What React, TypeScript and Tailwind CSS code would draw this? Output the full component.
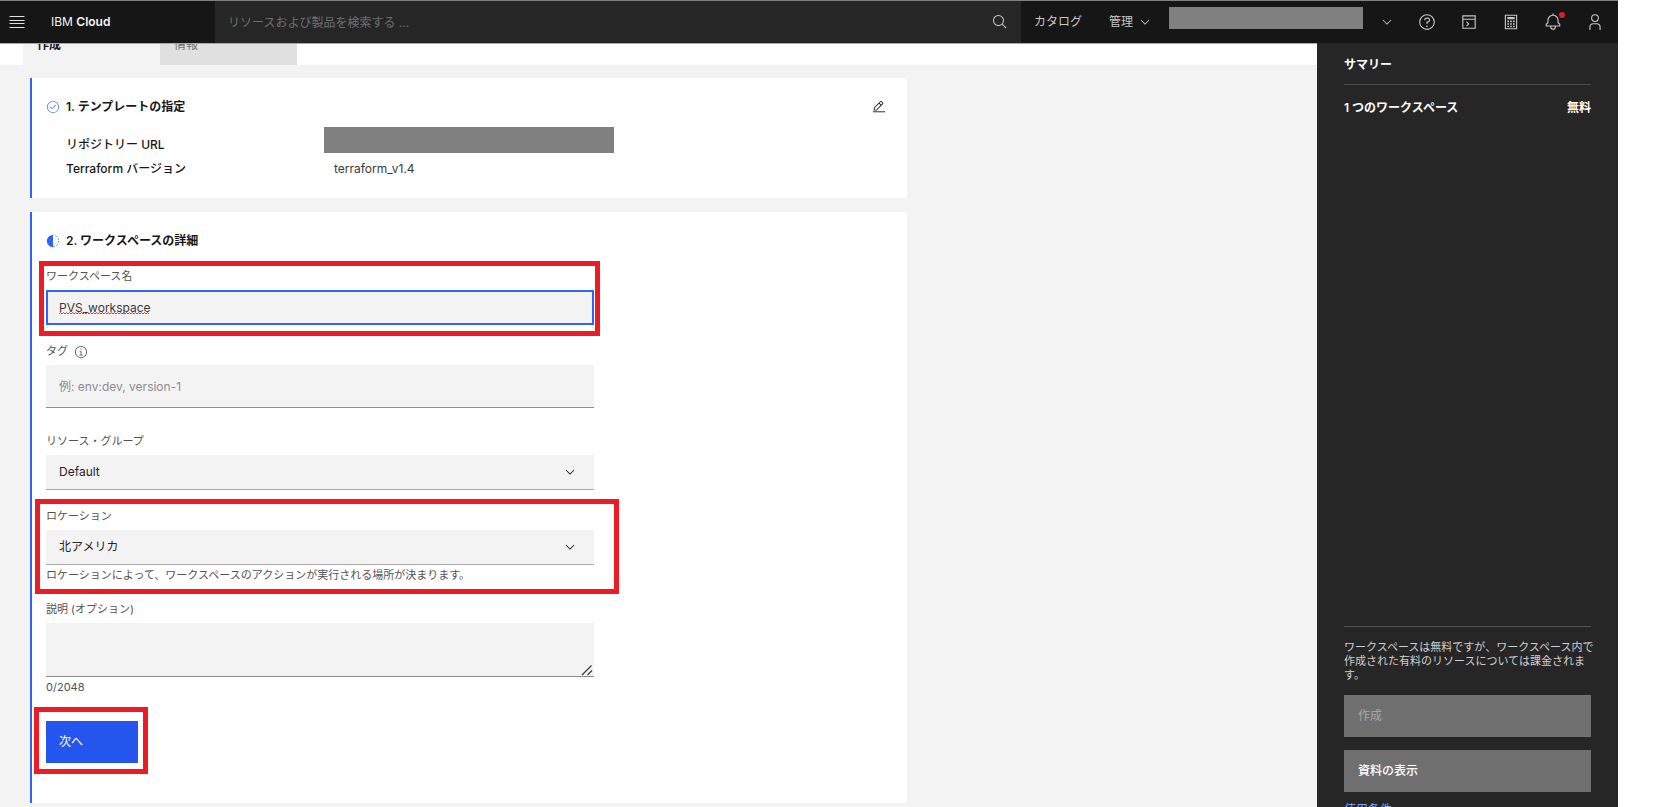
import { useState } from "react";
import type { ReactNode } from "react";

interface IconProps {
  className?: string;
  children: ReactNode;
}

const LOCATIONS = ["北アメリカ", "ヨーロッパ", "ロンドン"];
const RESOURCE_GROUPS = ["Default"];
const MAX_DESCRIPTION = 2048;

const RING =
  "M16,2A14,14,0,1,0,30,16,14,14,0,0,0,16,2Zm0,26A12,12,0,1,1,28,16,12,12,0,0,1,16,28Z";

function Icon({ className = "size-[18px]", children }: IconProps) {
  return (
    <svg
      viewBox="0 0 32 32"
      fill="currentColor"
      className={`shrink-0 ${className}`}
      aria-hidden="true"
    >
      {children}
    </svg>
  );
}

function ChevronDown({ className }: { className?: string }) {
  return (
    <Icon className={className}>
      <path d="M16 22L6 12 7.4 10.6 16 19.2 24.6 10.6 26 12z" />
    </Icon>
  );
}

function HeaderButton({ label, children }: { label: string; children: ReactNode }) {
  return (
    <button
      type="button"
      aria-label={label}
      className="flex h-full w-[42px] items-center justify-center"
    >
      {children}
    </button>
  );
}

function Header() {
  return (
    <header className="relative z-10 flex h-[43px] shrink-0 border-t border-[#808080] bg-[#161616] text-xs text-[#c6c6c6]">
      <div className="flex w-[215px] shrink-0 items-center">
        <button type="button" aria-label="メニュー" className="flex h-full items-center pr-[26px] pl-[9px]">
          <svg viewBox="0 0 16 12" className="h-3 w-4" stroke="#e0e0e0" aria-hidden="true">
            <path d="M0.5 0.5h15M0.5 4.5h15M0.5 7.5h15M0.5 11.5h15" />
          </svg>
        </button>
        <a href="#home" className="text-[#f4f4f4]">
          IBM <span className="font-semibold">Cloud</span>
        </a>
      </div>
      <div className="flex flex-1 items-center bg-[#262626] pr-[13px] pl-[13px]">
        <input
          type="text"
          aria-label="検索"
          placeholder="リソースおよび製品を検索する ..."
          className="h-full min-w-0 flex-1 bg-transparent outline-none placeholder:text-[#6f6f6f]"
        />
        <Icon className="size-4">
          <path d="M29,27.5859l-7.5521-7.5521a11.0177,11.0177,0,1,0-1.4141,1.4141L27.5859,29ZM4,13a9,9,0,1,1,9,9A9.01,9.01,0,0,1,4,13Z" />
        </Icon>
      </div>
      <nav className="flex shrink-0 items-center pr-[2px] pl-[13px]">
        <a href="#catalog">カタログ</a>
        <button type="button" className="ml-[27px] flex items-center gap-[5px]">
          管理
          <ChevronDown className="size-[14px]" />
        </button>
        <div className="mt-[-9px] ml-[17px] h-[22px] w-[194px] bg-[#808080]" />
        <button
          type="button"
          aria-label="アカウント"
          className="flex h-full w-[43px] items-center justify-center pl-[5px]"
        >
          <ChevronDown className="size-[14px]" />
        </button>
        <HeaderButton label="ヘルプ">
          <Icon>
            <path d={RING} />
            <circle cx="16" cy="23.5" r="1.5" />
            <path d="M17,8H15.5A4.49,4.49,0,0,0,11,12.5V13h2v-.5A2.5,2.5,0,0,1,15.5,10H17a2.5,2.5,0,0,1,0,5H15v4.5h2V17a4.5,4.5,0,0,0,0-9Z" />
          </Icon>
        </HeaderButton>
        <HeaderButton label="シェル">
          <Icon>
            <path d="M28 4H4v24h24zM26 6v4H6V6zM6 26V12h20v14z" />
            <path d="M10.8 16.2 12.2 14.8 16.8 19.4 12.2 24 10.8 22.6 14 19.4z" />
          </Icon>
        </HeaderButton>
        <HeaderButton label="コスト見積もり">
          <Icon>
            <path d="M27 3H5v26h22zM25 27H7V5h18z" />
            <path d="M9.5 7h13v4h-13zM9.5 13.5h3v3h-3zM14.5 13.5h3v3h-3zM19.5 13.5h3v3h-3zM9.5 18h3v3h-3zM14.5 18h3v3h-3zM19.5 18h3v3h-3zM9.5 22.5h3v3h-3zM14.5 22.5h3v3h-3zM19.5 22.5h3v3h-3z" />
          </Icon>
        </HeaderButton>
        <HeaderButton label="通知">
          <span className="relative">
            <Icon>
              <path d="M28.7071,19.293,26,16.5859V13a10.0136,10.0136,0,0,0-9-9.9492V1H15V3.0508A10.0136,10.0136,0,0,0,6,13v3.5859L3.2929,19.293A1,1,0,0,0,3,20v3a1,1,0,0,0,1,1h7v.7768a5.152,5.152,0,0,0,4.5,5.1987A5.0057,5.0057,0,0,0,21,25V24h7a1,1,0,0,0,1-1V20A1,1,0,0,0,28.7071,19.293ZM19,25a3,3,0,0,1-6,0V24h6Zm8-3H5V20.4141L7.707,17.707A1,1,0,0,0,8,17V13a8,8,0,0,1,16,0v4a1,1,0,0,0,.293.707L27,20.4141Z" />
            </Icon>
            <span className="absolute -top-[1px] -right-[3px] size-[6px] rounded-full bg-[#da1e28]" />
          </span>
        </HeaderButton>
        <HeaderButton label="プロファイル">
          <Icon>
            <path d="M16 4a5 5 0 1 1-5 5 5 5 0 0 1 5-5m0-2a7 7 0 1 0 7 7 7 7 0 0 0-7-7zM26 30H24V25a5 5 0 0 0-5-5H13a5 5 0 0 0-5 5v5H6V25a7 7 0 0 1 7-7h6a7 7 0 0 1 7 7z" />
          </Icon>
        </HeaderButton>
      </nav>
    </header>
  );
}

function Tabs() {
  return (
    <div role="tablist" className="-mt-[21px] flex bg-white pl-[23px] text-xs">
      <button
        type="button"
        role="tab"
        aria-selected="true"
        className="h-[42px] w-[137px] bg-[#f3f3f3] px-[14px] pt-[2px] text-left font-semibold text-[#161616]"
      >
        作成
      </button>
      <button
        type="button"
        role="tab"
        aria-selected="false"
        className="h-[42px] w-[137px] bg-[#e0e0e0] px-[14px] pt-[2px] text-left text-[#6f6f6f]"
      >
        情報
      </button>
    </div>
  );
}

function TemplateCard() {
  return (
    <section className="border-l-2 border-[#2f62ff] bg-white px-[14px] pt-5 pb-[17px]">
      <div className="flex h-[18px] items-center gap-[6px] pr-[7px]">
        <Icon className="size-[14px] text-[#5a87ff]">
          <path d={RING} />
          <path d="M14 21.414L9 16.413 10.413 15 14 18.586 21.585 11 23 12.415 14 21.414z" />
        </Icon>
        <h2 className="font-semibold">1. テンプレートの指定</h2>
        <button type="button" aria-label="編集" className="ml-auto">
          <Icon className="size-[14px]">
            <path d="M2 26H30V28H2z" />
            <path d="M25.4,9c.8-.8.8-2,0-2.8l-3.6-3.6c-.8-.8-2-.8-2.8,0L4,17.6V24h6.4L25.4,9z M20.4,4L24,7.6l-3,3L17.4,7L20.4,4z M6,22v-3.6L16,8.4l3.6,3.6L9.6,22H6z" />
          </Icon>
        </button>
      </div>
      <dl className="mt-[11px] grid grid-cols-[258px_1fr] pl-5 leading-6">
        <dt className="flex h-[30px] items-end font-medium">リポジトリー URL</dt>
        <dd className="h-[26px] w-[290px] bg-[#808080]" />
        <dt className="font-medium">Terraform バージョン</dt>
        <dd className="pl-[10px] text-[#393939]">terraform_v1.4</dd>
      </dl>
    </section>
  );
}

const labelClass = "mb-[5px] flex h-[17px] items-center text-[11px] text-[#525252]";
const helperClass = "mt-[2px] h-4 text-[11px] leading-4 whitespace-nowrap text-[#525252]";

function SelectField({ id, label, options }: { id: string; label: string; options: string[] }) {
  return (
    <>
      <label htmlFor={id} className={labelClass}>
        {label}
      </label>
      <div className="relative">
        <select
          id={id}
          className="block h-[35px] w-full appearance-none border-b border-[#a8a8a8] bg-[#f3f3f3] px-[13px] text-[#262626] outline-none"
        >
          {options.map((option) => (
            <option key={option}>{option}</option>
          ))}
        </select>
        <ChevronDown className="pointer-events-none absolute top-[10px] right-[17px] size-[14px]" />
      </div>
    </>
  );
}

function WorkspaceCard() {
  const [name, setName] = useState("PVS_workspace");
  const [description, setDescription] = useState("");

  return (
    <section className="border-l-2 border-[#2f62ff] bg-white px-[14px] pt-5 pb-10">
      <div className="flex h-[18px] items-center gap-[6px]">
        <Icon className="size-[14px] text-[#2f62ff]">
          <path d="M16 2a14 14 0 0 0 0 28z" />
          <circle
            cx="16"
            cy="16"
            r="13"
            fill="none"
            stroke="currentColor"
            strokeWidth="2"
            strokeDasharray="3.5 4.66"
          />
        </Icon>
        <h2 className="font-semibold">2. ワークスペースの詳細</h2>
      </div>

      <form
        className="mt-[18px] flex max-w-[548px] flex-col gap-[18px]"
        onSubmit={(event) => event.preventDefault()}
      >
        <div className="relative">
          <label htmlFor="workspace-name" className={labelClass}>
            ワークスペース名
          </label>
          <input
            id="workspace-name"
            type="text"
            value={name}
            spellCheck={false}
            onChange={(event) => setName(event.target.value)}
            className="block h-[35px] w-full border-2 border-[#2f62ff] bg-[#f3f3f3] px-[11px] text-[#393939] outline-none"
          />
          {name === "PVS_workspace" && (
            <svg
              viewBox="0 0 90 3"
              className="pointer-events-none absolute bottom-[10px] left-[13px] h-[3px] w-[90px]"
              fill="none"
              stroke="#e8323c"
              aria-hidden="true"
            >
              <path d={"M0 2" + "l1.5 -1.5 1.5 1.5".repeat(30)} />
            </svg>
          )}
          <div className="pointer-events-none absolute -top-[7px] -right-[6px] -bottom-[11px] -left-[7px] border-[5px] border-[#ed1c24]" />
        </div>

        <div className="mb-[7px]">
          <div className="flex gap-[6px]">
            <label htmlFor="tags" className={labelClass}>
              タグ
            </label>
            <button type="button" aria-label="タグについて" className="h-[17px] text-[#525252]">
              <Icon className="size-[14px]">
                <path d={RING} />
                <path d="M17 22V14H13V16H15V22H12V24H20V22zM16 8a1.5 1.5 0 1 0 1.5 1.5A1.5 1.5 0 0 0 16 8z" />
              </Icon>
            </button>
          </div>
          <input
            id="tags"
            type="text"
            placeholder="例: env:dev, version-1"
            className="block h-[43px] w-full border-b border-[#8d8d8d] bg-[#f3f3f3] px-[13px] outline-none placeholder:text-[#8d8d8d]"
          />
        </div>

        <div>
          <SelectField id="resource-group" label="リソース・グループ" options={RESOURCE_GROUPS} />
        </div>

        <div className="relative">
          <SelectField id="location" label="ロケーション" options={LOCATIONS} />
          <p className={helperClass}>
            ロケーションによって、ワークスペースのアクションが実行される場所が決まります。
          </p>
          <div className="pointer-events-none absolute -top-[9px] -right-[25px] -bottom-[11px] -left-[11px] border-[5px] border-[#ed1c24]" />
        </div>

        <div>
          <label htmlFor="description" className={labelClass}>
            説明 (オプション)
          </label>
          <div className="relative">
            <textarea
              id="description"
              value={description}
              maxLength={MAX_DESCRIPTION}
              onChange={(event) => setDescription(event.target.value)}
              className="block h-[54px] w-full resize-none border-b border-[#8d8d8d] bg-[#f3f3f3] px-[13px] py-2 outline-none"
            />
            <svg
              viewBox="0 0 12 12"
              className="pointer-events-none absolute right-[1px] bottom-[1px] size-3"
              stroke="#393939"
              strokeWidth="1.2"
              aria-hidden="true"
            >
              <path d="M1 11 10.5 1.5M6.5 11 11 6.5" />
            </svg>
          </div>
          <p className={helperClass}>
            {description.length}/{MAX_DESCRIPTION}
          </p>
        </div>

        <div className="relative mt-2 w-[92px]">
          <button
            type="submit"
            className="block h-[42px] w-full bg-[#2456ed] px-[13px] text-left text-white"
          >
            次へ
          </button>
          <div className="pointer-events-none absolute -top-[14px] -right-[10px] -bottom-[11px] -left-3 border-[5px] border-[#ed1c24]" />
        </div>
      </form>
    </section>
  );
}

function Summary() {
  return (
    <aside className="flex w-[301px] shrink-0 flex-col bg-[#262626] px-[27px] pt-[13px] text-white">
      <h2 className="border-b border-[#4a4a4a] pb-[10px] leading-[18px] font-semibold">サマリー</h2>
      <div className="mt-[14px] flex justify-between leading-[18px] font-semibold">
        <span>1 つのワークスペース</span>
        <span>無料</span>
      </div>
      <div className="mt-auto -mb-3 flex flex-col border-t border-[#525252] pt-[13px]">
        <p className="-mr-2 text-[11px] leading-[14px] text-[#d0d0d0]">
          ワークスペースは無料ですが、ワークスペース内で作成された有料のリソースについては課金されます。
        </p>
        <button
          type="button"
          disabled
          className="mt-[13px] h-[42px] bg-[#6f6f6f] px-[14px] text-left text-[#a8a8a8]"
        >
          作成
        </button>
        <button
          type="button"
          className="mt-[13px] h-[42px] bg-[#6f6f6f] px-[14px] text-left font-medium"
        >
          資料の表示
        </button>
        <a href="#terms" className="mt-[9px] leading-[18px] text-[#78a9ff]">
          使用条件
        </a>
      </div>
    </aside>
  );
}

export default function App() {
  return (
    <div
      lang="ja"
      className="flex h-screen flex-col overflow-hidden bg-white pr-[50px] font-['Inter','Noto_Sans_CJK_JP',sans-serif] text-xs text-[#161616]"
    >
      <Header />
      <div className="flex min-h-0 flex-1">
        <main className="min-w-0 flex-1 overflow-hidden border-t border-[#a8a8a8] bg-[#f3f3f3]">
          <Tabs />
          <div className="flex max-w-[907px] flex-col gap-[14px] pt-[13px] pl-[30px]">
            <TemplateCard />
            <WorkspaceCard />
          </div>
        </main>
        <Summary />
      </div>
    </div>
  );
}
